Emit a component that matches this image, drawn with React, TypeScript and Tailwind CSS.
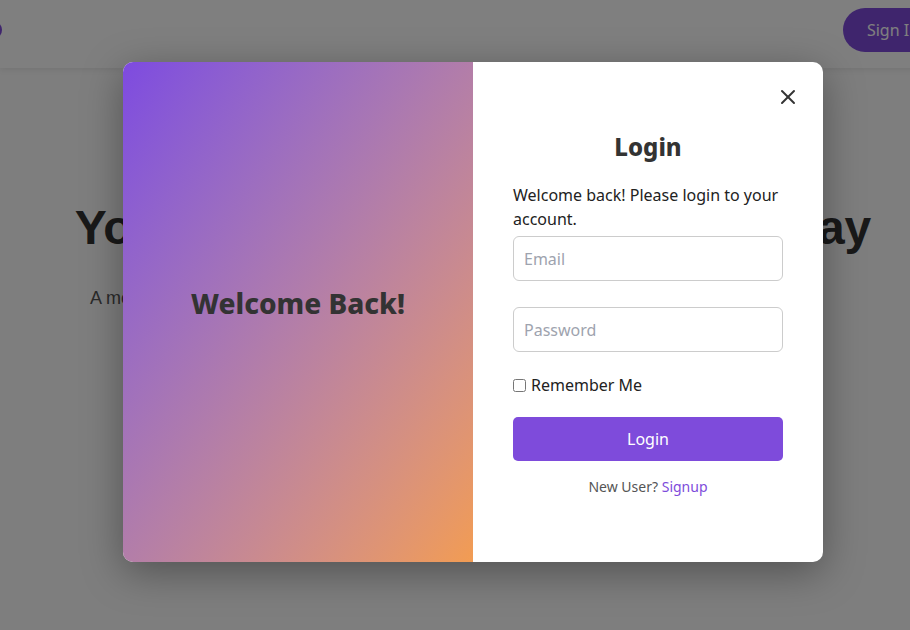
import { X } from "lucide-react";

const FONT = "font-['Noto_Sans','Open_Sans',sans-serif]";

function Header() {
  return (
    <header className="h-[68px] bg-white shadow-[0_2px_6px_rgba(0,0,0,0.08)] flex items-start justify-between pt-[8px] pr-[3px]">
      <div className="mt-[13px] w-[18px] h-[18px] rounded-full bg-[#7e4bdb] -ml-[16px]" />
      <button
        type="button"
        className="h-[44px] px-6 rounded-full bg-[#7e4bdb] text-white text-[16px]"
      >
        Sign In
      </button>
    </header>
  );
}

function Hero() {
  return (
    <main className="flex flex-col items-center pt-[130px]">
      <h1 className="whitespace-nowrap text-[48px] leading-[60px] font-bold text-[#333] font-['Liberation_Sans',Arial,sans-serif]">
        Your Next Adventure Begins Today
      </h1>
      <p className="w-[766px] mt-[27px] text-[18px] text-[#555] font-['Liberation_Sans',Arial,sans-serif]">
        A modern platform for planning trips, sharing stories and meeting travellers.
      </p>
    </main>
  );
}

function LoginModal() {
  return (
    <div className="absolute inset-0 z-50 bg-black/50 flex items-center justify-center">
      <div className="-mt-[6px] w-[700px] h-[500px] bg-white rounded-[10px] overflow-hidden flex shadow-[0_10px_40px_rgba(0,0,0,0.35)]">
        <div className="w-[350px] h-full bg-gradient-to-br from-[#7e4ae0] to-[#f29c52] flex items-center justify-center">
          <h2 className="-mt-[18px] text-[28px] font-extrabold text-[#333]">Welcome Back!</h2>
        </div>
        <div className="relative w-[350px] h-full px-10 flex flex-col justify-center">
          <button
            type="button"
            aria-label="Close"
            className="absolute top-[23px] right-[23px] text-[#333]"
          >
            <X size={24} strokeWidth={2} />
          </button>
          <h2 className="mt-[2px] text-center text-[24px] leading-[36px] font-extrabold text-[#333]">Login</h2>
          <p className="mt-[18px] text-[16px] leading-[24px] text-[#222]">
            Welcome back! Please login to your account.
          </p>
          <input
            type="email"
            placeholder="Email"
            className="mt-[5px] h-[45px] w-full px-[10px] rounded-[6px] border border-[#ccc] text-[16px] placeholder:text-[#9ea3ae] outline-none"
          />
          <input
            type="password"
            placeholder="Password"
            className="mt-[26px] h-[45px] w-full px-[10px] rounded-[6px] border border-[#ccc] text-[16px] placeholder:text-[#9ea3ae] outline-none"
          />
          <label className="mt-[21px] h-[24px] flex items-center gap-[5px] text-[16px] text-[#222]">
            <input type="checkbox" className="w-[13px] h-[13px] m-0" />
            Remember Me
          </label>
          <button
            type="button"
            className="mt-[20px] h-[44px] w-full rounded-[5px] bg-[#7e4bdb] text-white text-[16px]"
          >
            Login
          </button>
          <p className="mt-[16px] text-center text-[14px] leading-[20px] text-[#555]">
            New User? <a className="text-[#7e4bdb]">Signup</a>
          </p>
        </div>
      </div>
    </div>
  );
}

export default function App() {
  return (
    <div className={`w-[910px] h-[630px] overflow-hidden ${FONT}`}>
      <div className="relative w-[946px] h-[630px] bg-[#fcfcfc]">
        <Header />
        <Hero />
        <LoginModal />
      </div>
    </div>
  );
}
